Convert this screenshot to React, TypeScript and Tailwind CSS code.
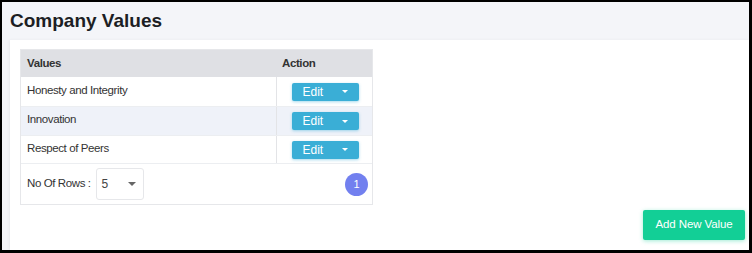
const rows = ["Honesty and Integrity", "Innovation", "Respect of Peers"]

function EditButton() {
  return (
    <button className="w-[67px] h-[18px] rounded-[2px] bg-[#3aaed6] text-white text-[12px] leading-none flex items-center pl-[11px] pr-[11px] justify-between shadow-[0_1px_3px_rgba(58,174,214,0.45)]">
      <span>Edit</span>
      <span className="w-0 h-0 border-l-[3px] border-r-[3px] border-t-[3px] border-l-transparent border-r-transparent border-t-white" />
    </button>
  )
}

export default function App() {
  return (
    <div
      className="w-[752px] h-[253px] border-t-2 border-l-2 border-r-[3px] border-b-[3px] border-black bg-[#f4f5f9] flex flex-col text-[#333]"
      style={{ fontFamily: '"Liberation Sans", Arial, sans-serif' }}
    >
      <div className="h-[38px] flex items-center pl-[8px] pt-[1px]">
        <h1 className="text-[19px] font-bold text-[#1c1e24]">Company Values</h1>
      </div>
      <div className="flex-1 ml-[8px] bg-white flex flex-col shadow-[-1px_0_3px_rgba(0,0,0,0.05)] pl-[10px] pt-[9px]">
        <div className="w-[353px] border border-[#e6e7ea] text-[11.5px] tracking-[-0.4px]">
          <div className="flex h-[27px] bg-[#dfe0e4] font-bold text-[#333]">
            <div className="w-[256px] flex items-center pl-[6px]">Values</div>
            <div className="flex-1 flex items-center pl-[5px]">Action</div>
          </div>
          {rows.map((r, i) => (
            <div
              key={r}
              className={`flex ${i === 2 ? "h-[28px]" : "h-[29px]"} ${i === 1 ? "bg-[#eff2f9]" : "bg-white"} ${i > 0 ? "border-t border-[#eceef1]" : ""}`}
            >
              <div className="w-[256px] flex items-center pb-[2px] pl-[6px] border-r border-[#e3e4e7]">{r}</div>
              <div className="flex-1 flex items-center justify-center pl-[1px] tracking-normal">
                <EditButton />
              </div>
            </div>
          ))}
          <div className="h-[41px] flex items-center justify-between border-t border-[#eceef1] pl-[6px] pr-[4px]">
            <div className="flex items-center gap-[5px]">
              <span>No Of Rows :</span>
              <div className="w-[48px] h-[32px] border border-[#e6e7ea] rounded-[3px] flex items-center justify-between pl-[5px] pr-[7px] text-[12px] text-[#444] tracking-normal">
                <span>5</span>
                <span className="w-0 h-0 border-l-[4px] border-r-[4px] border-t-[4px] border-l-transparent border-r-transparent border-t-[#666]" />
              </div>
            </div>
            <div className="w-[23px] h-[23px] rounded-full bg-[#7280ef] text-white text-[11px] tracking-normal flex items-center justify-center">1</div>
          </div>
        </div>
        <div className="flex-1" />
        <div className="self-end mr-[4px] mb-[10px]">
          <button className="w-[102px] h-[30px] rounded-[2px] bg-[#12cf96] text-white text-[11.5px] tracking-[-0.1px] shadow-[0_1px_4px_rgba(18,207,150,0.4)]">
            Add New Value
          </button>
        </div>
      </div>
    </div>
  )
}
